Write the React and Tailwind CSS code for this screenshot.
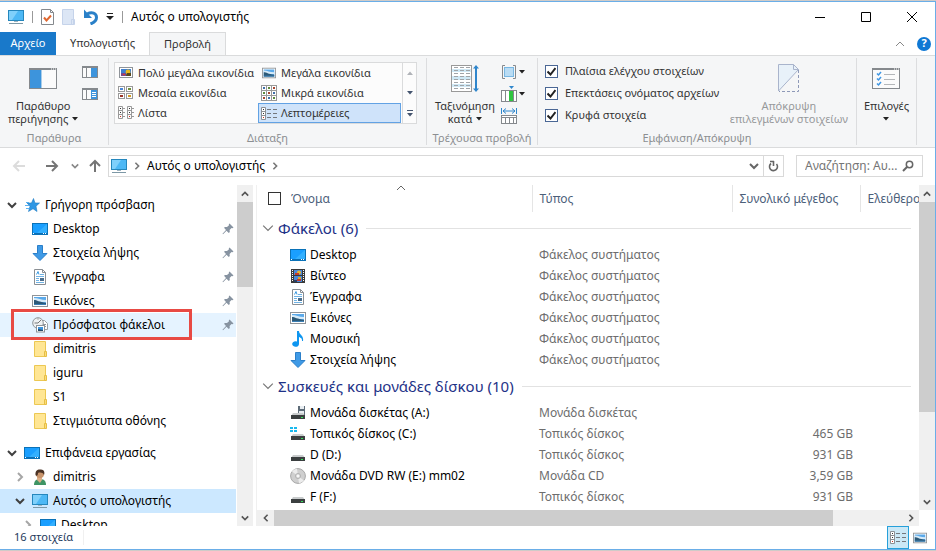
import { Fragment } from 'react';
import clsx from 'clsx';

/* ---------- Icons ---------- */

const MonitorIcon = ({ size = 16 }) => (
  <svg width={size} height={size} viewBox="0 0 16 16">
    <rect x="0.5" y="1.5" width="15" height="10" fill="#4db8f5" stroke="#2587bd" />
    <path d="M1 2h9L4 11H1z" fill="#7fd0fb" />
    <path d="M6 12h4v1H6z" fill="#9fb4c0" />
    <path d="M1 14h14v1H1z" fill="#7d98a6" />
  </svg>
);

const DesktopIcon = () => (
  <svg width="16" height="16" viewBox="0 0 16 16">
    <rect x="0.5" y="2.5" width="15" height="11" fill="#1a9fff" stroke="#0a72b8" />
    <path d="M15 3v9H5z" fill="#33b0ff" />
    <path d="M1 12h14v1H1z" fill="#0b6fb5" />
    <path d="M1 12h1v1H1zM11 12h1v1h-1zM13 12h1v1h-1z" fill="#fff" />
  </svg>
);

const DownloadIcon = () => (
  <svg width="16" height="16" viewBox="0 0 16 16">
    <path d="M5.5 0.5h5v8h4.500L8 15.5 1 8.500h4.500z" fill="#3f9ae6" stroke="#2b7fc9" />
  </svg>
);

const DocumentIcon = () => (
  <svg width="16" height="16" viewBox="0 0 16 16">
    <path d="M2.5 0.5h8l3 3v12h-11z" fill="#fff" stroke="#8a8f94" />
    <path d="M10.5 0.5v3h3" fill="none" stroke="#8a8f94" />
    <path d="M4.500 5.500l1.500-3 1 3" fill="none" stroke="#3b9ae0" />
    <path d="M8 5.500h4M4 7.5h8M4 9.5h3M4 11.5h3M4 13.5h8" fill="none" stroke="#6fb2e4" />
    <rect x="8" y="9" width="4" height="3" fill="#4a6d8c" />
  </svg>
);

const PictureIcon = ({ size = 16 }) => (
  <svg width={size} height={size} viewBox="0 0 16 16">
    <rect x="0.5" y="2.5" width="15" height="11" fill="#fff" stroke="#8f9499" />
    <rect x="2" y="4" width="12" height="8" fill="#5aa9ea" />
    <path d="M2 5c4 0 7 2 12 2v2H2z" fill="#d5eaf8" />
    <path d="M2 7c3 0 5 2 12 3v2H2z" fill="#2d5a78" />
    <path d="M2 11h12v1H2z" fill="#3b7fb5" />
  </svg>
);

const ColorPictureIcon = () => (
  <svg width="14" height="14" viewBox="0 0 14 14">
    <rect x="0.5" y="1.5" width="13" height="10" fill="#fff" stroke="#8f9499" />
    <rect x="2" y="3" width="10" height="7" fill="#3e7fd0" />
    <path d="M2 7h5v3H2z" fill="#7a4a8a" />
    <circle cx="9" cy="6" r="2.4" fill="#e8b81c" />
    <path d="M8 7h4v3H7z" fill="#5a4a1c" />
    <path d="M4 8h2v1H4z" fill="#e23b2e" />
  </svg>
);

const VideoIcon = () => (
  <svg width="16" height="16" viewBox="0 0 16 16">
    <path d="M1 1h14v14H1z" fill="#3a3a3a" />
    <path d="M2 2h1v1H2zM2 4h1v1H2zM2 6h1v1H2zM2 8h1v1H2zM2 10h1v1H2zM2 12h1v1H2zM13 2h1v1h-1zM13 4h1v1h-1zM13 6h1v1h-1zM13 8h1v1h-1zM13 10h1v1h-1zM13 12h1v1h-1z" fill="#fff" />
    <path d="M4 2h8v5H4zM4 8h8v6H4z" fill="#4a87d8" />
    <circle cx="9" cy="4.5" r="2" fill="#e7b52c" />
    <path d="M5 5h4v2H5zM7 11h4v2H7z" fill="#c4392b" />
    <path d="M8 9h3v2H8z" fill="#d9a52b" />
    <path d="M4 12h3v2H4z" fill="#27406a" />
  </svg>
);

const MusicIcon = () => (
  <svg width="16" height="16" viewBox="0 0 16 16">
    <path d="M7 0h2c0 4 5 4 4 10h-1c0-3-1-3-3-4v7a3.4 2.8 0 1 1-2-2.5z" fill="#0f96f0" />
  </svg>
);

const StarIcon = () => (
  <svg width="16" height="16" viewBox="0 0 16 16">
    <path d="M9.500 1.500l1.500 4.500h4.500l-3.500 3.200 1 5.300-4-2.800-4.500 2.800 1.500-5.300L3 6h4.500z" fill="#2f97e4" stroke="#1e7cc4" strokeWidth="0.6" />
    <path d="M2 5.500h3M1 8.500h4M2 11.500h3" stroke="#5db2f0" />
  </svg>
);

const RecentIcon = () => (
  <svg width="16" height="16" viewBox="0 0 16 16">
    <path d="M7.500 3.500h5l3 3v6h-8z" fill="#fff" stroke="#9a9fa3" />
    <circle cx="6" cy="6" r="5.300" fill="#eef1f3" stroke="#8f9499" />
    <path d="M6 6l3-3M6 6H2.500M6 1.500v1" fill="none" stroke="#777" />
    <path d="M11 7.500h3M13 9.500h1" stroke="#8f9499" />
    <rect x="4.500" y="8.500" width="8" height="6.500" fill="#fff" stroke="#8f9499" />
    <path d="M6 10h5v4H6z" fill="#3d93dc" />
    <path d="M6 12l5 1v1H6z" fill="#254c6b" />
  </svg>
);

const FolderIcon = () => (
  <svg width="16" height="16" viewBox="0 0 16 16">
    <path d="M2.500 0.500h11v15h-11z" fill="#ffe694" stroke="#ecc853" />
    <path d="M12.500 10.500h2v5h-2z" fill="#fbdc7a" stroke="#e6be45" />
  </svg>
);

const UserIcon = () => (
  <svg width="16" height="16" viewBox="0 0 16 16">
    <path d="M2 16c0-4 2-6 6-6s6 2 6 6z" fill="#3f9464" />
    <path d="M5 8h5v3l-2 3-3-3z" fill="#dcae87" />
    <circle cx="8" cy="5" r="4" fill="#c9956c" />
    <path d="M3.500 6C3 1 6 0 9 0.500c3 0 4 3 3 5.500C11 3.500 8 3 6 4c0 2-1 4-2.500 2z" fill="#4b3325" />
  </svg>
);

const DriveIcon = ({ kind }) => (
  <svg width="16" height="16" viewBox="0 0 16 16">
    {kind === 'floppy' && (
      <>
        <path d="M8 1h7v9H8z" fill="#5d6b78" />
        <path d="M10 1h4v3h-4zM9 6h5v3H9z" fill="#e8edf1" />
      </>
    )}
    {kind === 'system' && <path d="M0 1h3v2H0zM4 1h3v2H4zM0 4h3v2H0zM4 4h3v2H4z" fill="#19b9ee" />}
    <path d="M3 8h10l2 3H1z" fill="#c9cccd" />
    <path d="M1 10h14v4H1z" fill="#3b3f40" />
    <path d="M11 12h2v1h-2z" fill="#35e05a" />
  </svg>
);

const DiscIcon = () => (
  <svg width="16" height="16" viewBox="0 0 16 16">
    <circle cx="8" cy="8" r="7.400" fill="#cfcfcf" stroke="#a8a8a8" />
    <path d="M8 8L2 3.500A7.400 7.400 0 0 1 7 0.800zM8 8l6 4.500A7.400 7.400 0 0 1 9 15.200z" fill="#ececec" />
    <circle cx="8" cy="8" r="2.500" fill="#e4e4e4" stroke="#b0b0b0" />
    <circle cx="8" cy="8" r="1" fill="#fff" />
  </svg>
);

const PinIcon = () => (
  <svg width="12" height="12" viewBox="0 0 12 12">
    <path d="M7.500 0.500l4 4-1 0.800-1-0.200L7.600 7l0.200 2-1 1L4.500 7.700 1 11.200l-0.500-0.400L4 7 2 4.800l1-0.900 2 0.200L7 2.300 6.800 1.200z" fill="#8793a1" />
  </svg>
);

const Chevron = ({ dir = 'down', size = 10, color = '#555', weight = 2 }) => {
  const turn = { down: 0, left: 90, up: 180, right: 270 }[dir];
  return (
    <svg width={size} height={size} viewBox="0 0 10 10">
      <path d="M1 3l4 4 4-4" fill="none" stroke={color} strokeWidth={weight} transform={`rotate(${turn} 5 5)`} />
    </svg>
  );
};

const Caret = ({ color = '#222', up = false }) => (
  <svg width="6" height="4" viewBox="0 0 6 4">
    <path d={up ? 'M0 4h6L3 0.500z' : 'M0 0h6L3 3.500z'} fill={color} />
  </svg>
);

const ArrowIcon = ({ dir, color }) => {
  const turn = { left: 0, up: 90, right: 180 }[dir];
  return (
    <svg width="14" height="14" viewBox="0 0 14 14">
      <path d="M13 7H2M7 2L2 7l5 5" fill="none" stroke={color} strokeWidth="2" transform={`rotate(${turn} 7 7)`} />
    </svg>
  );
};

const NavPaneIcon = () => (
  <svg width="28" height="22" viewBox="0 0 28 22">
    <rect x="0.500" y="0.500" width="27" height="20" fill="#fbfbfb" stroke="#85898d" />
    <path d="M0 0h28v2H0z" fill="#85898d" />
    <path d="M22 0.500h1v1h-1zM24 0.500h1v1h-1zM26 0.500h1v1h-1z" fill="#fff" />
    <path d="M1 2h11v18H1z" fill="#3d94dc" />
    <path d="M12 2h1v18h-1z" fill="#a9cdea" />
  </svg>
);

const SidePaneIcon = ({ lines }) => (
  <svg width="16" height="12" viewBox="0 0 16 12">
    <rect x="0.500" y="0.500" width="15" height="11" fill="#fbfbfb" stroke="#85898d" />
    <path d="M0 0h16v2H0zM4 2h1v9H4z" fill="#85898d" />
    <path d="M9 2h6v9H9z" fill="#3d94dc" />
    {lines && <path d="M10 4.500h4M10 6.500h4M10 8.500h4" stroke="#fff" />}
  </svg>
);

const MediumIconsIcon = () => (
  <svg width="16" height="14" viewBox="0 0 16 14">
    {[[0, 0], [8, 0], [0, 7], [8, 7]].map(([x, y], i) => (
      <g key={i}>
        <rect x={x + 0.5} y={y + 0.5} width="6" height="5" fill="#fff" stroke="#999" />
        <rect x={x + 2} y={y + 2} width="3" height="2" fill={['#4a87d8', '#6f8f3c', '#9c3528', '#d09a22'][i]} />
      </g>
    ))}
  </svg>
);

const SmallIconsIcon = () => (
  <svg width="16" height="16" viewBox="0 0 16 16">
    {[0, 1, 2].map((row) =>
      [0, 1, 2].map((col) => (
        <g key={`${row}${col}`}>
          <rect x={col * 5 + 0.5} y={row * 5 + 0.5} width="5" height="5" fill="#fff" stroke="#999" />
          <rect x={col * 5 + 2} y={row * 5 + 2} width="2" height="2" fill={['#3f6fa8', '#5c8a3c', '#a8452f'][(row + col) % 3]} />
        </g>
      ))
    )}
  </svg>
);

const ListIcon = () => (
  <svg width="16" height="14" viewBox="0 0 16 14">
    {[0, 9].map((x) => (
      <g key={x}>
        <path d={`M${x + 0.5} 0.500h4v12h-4zM${x} 4.500h4M${x} 8.500h4M${x + 5} 2.500h2M${x + 5} 6.500h2M${x + 5} 10.500h2`} fill="none" stroke="#999" />
        <path d={`M${x + 2} 2h1v1h-1zM${x + 2} 6h1v1h-1z`} fill="#333" />
        <path d={`M${x + 2} 10h1v1h-1z`} fill="#d02f20" />
      </g>
    ))}
  </svg>
);

const DetailsIcon = () => (
  <svg width="16" height="13" viewBox="0 0 16 13">
    <path d="M0.500 0.500h4v12h-4zM0 4.500h4M0 8.500h4" fill="#fff" stroke="#8b8f94" />
    <path d="M2 2h1v1H2zM2 6h1v1H2z" fill="#333" />
    <path d="M2 10h1v1H2z" fill="#d02f20" />
    <path d="M6 2.500h4M12 2.500h4M6 6.500h4M12 6.500h4M6 10.500h4M12 10.500h4" stroke="#74787d" />
  </svg>
);

const SortIcon = () => (
  <svg width="28" height="30" viewBox="0 0 28 30">
    <rect x="0.500" y="1.500" width="20" height="26" fill="#fff" stroke="#999" />
    <path d="M1 5h19v3H1zM1 12h19v4H1zM1 20h19v3H1z" fill="#cfe8f5" />
    <path d="M3 3.500h16M3 6.500h16M3 9.500h16M3 12.500h16M3 15.500h16M3 18.500h16M3 21.500h16M3 24.500h16" stroke="#a0a4a8" strokeDasharray="4 2" />
    <path d="M25 3v22" stroke="#2f86cc" strokeWidth="2" />
    <path d="M22 4.500L25 1l3 3.500zM22 24.500L25 28l3-3.500z" fill="#2f86cc" />
  </svg>
);

const GroupByIcon = () => (
  <svg width="16" height="16" viewBox="0 0 16 16">
    <path d="M4 1.500H1.500v13H4M12 1.500h2.500v13H12" fill="none" stroke="#85898d" />
    <rect x="3.500" y="3.500" width="9" height="9" fill="#b9dcf4" stroke="#79b7e2" />
  </svg>
);

const AddColumnIcon = () => (
  <svg width="16" height="16" viewBox="0 0 16 16">
    <rect x="0.500" y="4.500" width="15" height="11" fill="#fff" stroke="#85898d" />
    <path d="M4.500 4v12M12.500 4v12" stroke="#85898d" />
    <path d="M8 5h4v10H8z" fill="#2fc540" />
    <path d="M8 0h5l-2.500 3z" fill="#2f86cc" />
  </svg>
);

const SizeColumnsIcon = () => (
  <svg width="16" height="16" viewBox="0 0 16 16">
    <path d="M0.500 0v6M15.500 0v6M2 3h12M5 0.500L2 3l3 2.500M11 0.500L14 3l-3 2.500" fill="none" stroke="#2f86cc" />
    <rect x="0.500" y="7.500" width="15" height="8" fill="#fff" stroke="#85898d" />
    <path d="M0 9.500h16M4.500 10v6M8.500 10v6M12.500 10v6" stroke="#85898d" />
  </svg>
);

const HideIcon = () => (
  <svg width="22" height="29" viewBox="0 0 22 29">
    <path d="M0.500 27V0.500h15l5 5L0.500 27z" fill="#e8f1f9" stroke="#a9b4cc" />
    <path d="M15.500 0.500v5h5" fill="none" stroke="#a9b4cc" />
    <path d="M20.500 6v21.500H1" fill="none" stroke="#8e99b8" strokeDasharray="3 2" />
  </svg>
);

const OptionsIcon = () => (
  <svg width="28" height="22" viewBox="0 0 28 22">
    <rect x="0.500" y="0.500" width="27" height="20" fill="#fbfbfb" stroke="#85898d" />
    <path d="M0 0h28v2H0z" fill="#85898d" />
    <path d="M22 0.500h1v1h-1zM24 0.500h1v1h-1zM26 0.500h1v1h-1z" fill="#fff" />
    <path d="M5 5.500l1.500 1.500L9 4M5 10.500l1.500 1.500L9 9M5 15.500l1.500 1.500L9 14" fill="none" stroke="#3f97e4" strokeWidth="1.500" />
    <path d="M12 6.500h11M12 11.500h11M12 16.500h11" stroke="#b4b7ba" />
  </svg>
);

/* ---------- Data ---------- */

const tabs = [
  { label: 'Υπολογιστής', active: false },
  { label: 'Προβολή', active: true }
];

const layouts = [
  { label: 'Πολύ μεγάλα εικονίδια', icon: <ColorPictureIcon /> },
  { label: 'Μεγάλα εικονίδια', icon: <PictureIcon size={14} /> },
  { label: 'Μεσαία εικονίδια', icon: <MediumIconsIcon /> },
  { label: 'Μικρά εικονίδια', icon: <SmallIconsIcon /> },
  { label: 'Λίστα', icon: <ListIcon /> },
  { label: 'Λεπτομέρειες', icon: <DetailsIcon />, active: true }
];

const toggles = ['Πλαίσια ελέγχου στοιχείων', 'Επεκτάσεις ονόματος αρχείων', 'Κρυφά στοιχεία'];

const quickAccess = [
  { label: 'Γρήγορη πρόσβαση', icon: <StarIcon />, level: 0, chevron: 'down' },
  { label: 'Desktop', icon: <DesktopIcon />, level: 1, pinned: true },
  { label: 'Στοιχεία λήψης', icon: <DownloadIcon />, level: 1, pinned: true },
  { label: 'Έγγραφα', icon: <DocumentIcon />, level: 1, pinned: true },
  { label: 'Εικόνες', icon: <PictureIcon />, level: 1, pinned: true },
  { label: 'Πρόσφατοι φάκελοι', icon: <RecentIcon />, level: 1, pinned: true, hovered: true, framed: true },
  { label: 'dimitris', icon: <FolderIcon />, level: 1 },
  { label: 'iguru', icon: <FolderIcon />, level: 1 },
  { label: 'S1', icon: <FolderIcon />, level: 1 },
  { label: 'Στιγμιότυπα οθόνης', icon: <FolderIcon />, level: 1 }
];

const desktopTree = [
  { label: 'Επιφάνεια εργασίας', icon: <DesktopIcon />, level: 0, chevron: 'down' },
  { label: 'dimitris', icon: <UserIcon />, level: 1, chevron: 'right' },
  { label: 'Αυτός ο υπολογιστής', icon: <MonitorIcon />, level: 1, chevron: 'down', selected: true },
  { label: 'Desktop', icon: <DesktopIcon />, level: 2, chevron: 'right' }
];

const groups = [
  {
    title: 'Φάκελοι (6)',
    rows: [
      { name: 'Desktop', type: 'Φάκελος συστήματος', icon: <DesktopIcon /> },
      { name: 'Βίντεο', type: 'Φάκελος συστήματος', icon: <VideoIcon /> },
      { name: 'Έγγραφα', type: 'Φάκελος συστήματος', icon: <DocumentIcon /> },
      { name: 'Εικόνες', type: 'Φάκελος συστήματος', icon: <PictureIcon /> },
      { name: 'Μουσική', type: 'Φάκελος συστήματος', icon: <MusicIcon /> },
      { name: 'Στοιχεία λήψης', type: 'Φάκελος συστήματος', icon: <DownloadIcon /> }
    ]
  },
  {
    title: 'Συσκευές και μονάδες δίσκου (10)',
    rows: [
      { name: 'Μονάδα δισκέτας (A:)', type: 'Μονάδα δισκέτας', icon: <DriveIcon kind="floppy" /> },
      { name: 'Τοπικός δίσκος (C:)', type: 'Τοπικός δίσκος', size: '465 GB', icon: <DriveIcon kind="system" /> },
      { name: 'D (D:)', type: 'Τοπικός δίσκος', size: '931 GB', icon: <DriveIcon /> },
      { name: 'Μονάδα DVD RW (E:) mm02', type: 'Μονάδα CD', size: '3,59 GB', icon: <DiscIcon /> },
      { name: 'F (F:)', type: 'Τοπικός δίσκος', size: '931 GB', icon: <DriveIcon /> }
    ]
  }
];

/* ---------- Window parts ---------- */

const TitleBar = () => (
  <header className="flex h-[30px] items-center pl-2">
    <MonitorIcon />
    <span className="mx-2 h-3 w-px bg-[#999]" />
    <div className="flex items-center gap-2">
      <button aria-label="Ιδιότητες">
        <svg width="13" height="16" viewBox="0 0 13 16" className="block">
          <path d="M0.500 0.500h9l3 3v12H0.500z" fill="#fff" stroke="#85898d" />
          <path d="M9.500 0.500v3h3" fill="none" stroke="#85898d" />
          <path d="M3 8.500l2.500 3 4.500-5" fill="none" stroke="#e0672f" strokeWidth="2" />
        </svg>
      </button>
      <button aria-label="Νέος φάκελος">
        <svg width="14" height="16" viewBox="0 0 14 16" className="block">
          <path d="M0.500 0.500h11v15H0.500zM9.500 10.500h3v5h-3z" fill="#dce6f5" stroke="#c5d3ea" />
        </svg>
      </button>
      <button aria-label="Αναίρεση">
        <svg width="14" height="16" viewBox="0 0 14 16" className="block">
          <path d="M3 5c5-2.500 9.500-1 9.500 3.500 0 3-2.500 5-6 6.500" fill="none" stroke="#2a80c8" strokeWidth="3" />
          <path d="M0 0.500v8.500h8z" fill="#2a80c8" />
        </svg>
      </button>
      <button aria-label="Προσαρμογή">
        <svg width="8" height="8" viewBox="0 0 8 8" className="block">
          <path d="M1 0h6v1H1zM0 3h8L4 7z" fill="#222" />
        </svg>
      </button>
    </div>
    <span className="mx-2 h-3 w-px bg-[#999]" />
    <h1 className="text-xs text-black">Αυτός ο υπολογιστής</h1>
    <div className="ml-auto flex">
      <button aria-label="Ελαχιστοποίηση" className="flex w-[46px] justify-center">
        <svg width="10" height="10"><path d="M0 5.500h10" stroke="#000" /></svg>
      </button>
      <button aria-label="Μεγιστοποίηση" className="flex w-[46px] justify-center">
        <svg width="10" height="10"><path d="M0.500 0.500h9v9h-9z" fill="none" stroke="#000" /></svg>
      </button>
      <button aria-label="Κλείσιμο" className="flex w-[46px] justify-center">
        <svg width="10" height="10"><path d="M0 0l10 10M10 0L0 10" stroke="#000" /></svg>
      </button>
    </div>
  </header>
);

const TabBar = () => (
  <div className="flex h-[23px] items-stretch text-[11px]">
    <button className="w-14 bg-[#1979ca] text-white">Αρχείο</button>
    {tabs.map((tab) => (
      <button
        key={tab.label}
        className={clsx(
          'px-3.5',
          tab.active ? '-mb-px border border-b-0 border-[#dadbdc] bg-[#f5f6f7] text-[#333]' : 'text-[#333]'
        )}
      >
        {tab.label}
      </button>
    ))}
    <div className="ml-auto flex items-center gap-3 pr-1">
      <button aria-label="Σύμπτυξη κορδέλας" className="flex">
        <Chevron dir="up" color="#888" weight={1} />
      </button>
      <button aria-label="Βοήθεια" className="flex size-3.5 items-center justify-center rounded-full bg-[#0f78d4] font-bold text-white">
        ?
      </button>
    </div>
  </div>
);

const RibbonGroup = ({ label, className, children }) => (
  <section className={clsx('flex shrink-0 flex-col border-r border-[#dcdddf]', className)}>
    <div className="flex h-[73px] items-start">{children}</div>
    <h2 className="text-center leading-[14px] text-[#8c8f92]">{label}</h2>
  </section>
);

const BigButton = ({ icon, first, second, disabled, caret }) => (
  <button disabled={disabled} className={clsx('flex flex-col items-center whitespace-nowrap', disabled ? 'text-[#97999b]' : 'text-[#333]')}>
    <span className="flex h-[41px] items-center">{icon}</span>
    <span className="leading-[13px]">{first}</span>
    <span className="flex h-[13px] items-center gap-1 leading-[13px]">
      {second}
      {caret && <Caret />}
    </span>
  </button>
);

const Ribbon = () => (
  <div className="flex h-[93px] border-y border-[#dadbdc] bg-[#f5f6f7] py-[2px] text-[11px]">
    <RibbonGroup label="Παράθυρα" className="w-[109px]">
      <div className="flex gap-1 pl-2">
        <BigButton icon={<NavPaneIcon />} first="Παράθυρο" second="περιήγησης" caret />
        <div className="flex flex-col gap-2.5 pt-2">
          <button aria-label="Παράθυρο προεπισκόπησης"><SidePaneIcon /></button>
          <button aria-label="Παράθυρο λεπτομερειών"><SidePaneIcon lines /></button>
        </div>
      </div>
    </RibbonGroup>

    <RibbonGroup label="Διάταξη" className="w-[318px]">
      <div className="mt-1 mr-[9px] ml-[5px] flex flex-1 border border-[#dadbdc] bg-[#fcfcfc]">
        <div className="grid flex-1 grid-cols-2">
          {layouts.map((item) => (
            <button
              key={item.label}
              className={clsx(
                'flex h-5 items-center gap-1 border pl-0.5 whitespace-nowrap text-[#333]',
                item.active ? 'border-[#62a2e4] bg-[#cfe3fa]' : 'border-transparent'
              )}
            >
              <span className="flex w-4 shrink-0 justify-center">{item.icon}</span>
              {item.label}
            </button>
          ))}
        </div>
        <div className="ml-px flex w-3.5 flex-col border-l border-[#dadbdc]">
          <button aria-label="Πάνω" className="flex h-5 items-center justify-center"><Caret up color="#b0b3b8" /></button>
          <button aria-label="Κάτω" className="flex h-5 items-center justify-center"><Caret color="#44546e" /></button>
          <button aria-label="Περισσότερα" className="flex h-5 flex-col items-center justify-center gap-0.5">
            <span className="h-px w-1.5 bg-[#44546e]" />
            <Caret color="#44546e" />
          </button>
        </div>
      </div>
    </RibbonGroup>

    <RibbonGroup label="Τρέχουσα προβολή" className="w-[111px]">
      <div className="flex gap-1.5 pl-2">
        <BigButton icon={<SortIcon />} first="Ταξινόμηση" second="κατά" caret />
        <div className="flex flex-col gap-1.5 pt-1.5">
          <button aria-label="Ομαδοποίηση κατά" className="flex items-center gap-0.5"><GroupByIcon /><Caret /></button>
          <button aria-label="Προσθήκη στηλών" className="flex items-center gap-0.5"><AddColumnIcon /><Caret /></button>
          <button aria-label="Προσαρμογή πλάτους στηλών"><SizeColumnsIcon /></button>
        </div>
      </div>
    </RibbonGroup>

    <RibbonGroup label="Εμφάνιση/Απόκρυψη" className="w-[319px]">
      <div className="flex flex-1 justify-between pr-2 pl-[7px]">
        <div className="pt-0.5">
          {toggles.map((label) => (
            <label key={label} className="flex h-[22px] items-center gap-[7px] whitespace-nowrap text-[#333]">
              <span className="grid size-[13px] place-items-center">
                <input type="checkbox" defaultChecked className="peer col-start-1 row-start-1 size-[13px] appearance-none border border-[#4a6795] bg-white" />
                <svg width="9" height="9" viewBox="0 0 9 9" className="invisible col-start-1 row-start-1 peer-checked:visible">
                  <path d="M0.500 4.500l3 3L8.500 1" fill="none" stroke="#222" strokeWidth="2" />
                </svg>
              </span>
              {label}
            </label>
          ))}
        </div>
        <BigButton icon={<HideIcon />} first="Απόκρυψη" second="επιλεγμένων στοιχείων" disabled />
      </div>
    </RibbonGroup>

    <RibbonGroup label="" className="w-[60px]">
      <div className="flex flex-1 justify-center">
        <BigButton icon={<OptionsIcon />} first="Επιλογές" caret />
      </div>
    </RibbonGroup>
  </div>
);

const AddressBar = () => (
  <div className="flex h-[37px] items-start px-3 pt-[7px]">
    <nav className="flex h-[22px] w-24 items-center justify-between pr-1.5">
      <button aria-label="Πίσω"><ArrowIcon dir="left" color="#dcdcdc" /></button>
      <button aria-label="Εμπρός" className="ml-2.5"><ArrowIcon dir="right" color="#757575" /></button>
      <button aria-label="Πρόσφατες θέσεις" className="ml-1"><Chevron size={8} color="#888" /></button>
      <button aria-label="Επάνω"><ArrowIcon dir="up" color="#757575" /></button>
    </nav>
    <div className="flex h-[22px] flex-1 items-center border border-[#d9d9d9] pl-0.5 text-black">
      <MonitorIcon />
      <span className="flex w-5 justify-center"><Chevron dir="right" size={8} color="#777" /></span>
      <button>Αυτός ο υπολογιστής</button>
      <span className="flex w-5 justify-center"><Chevron dir="right" size={8} color="#777" /></span>
      <button aria-label="Προηγούμενες θέσεις" className="mr-1 ml-auto"><Chevron color="#666" /></button>
      <button aria-label="Ανανέωση" className="flex h-full w-5 items-center justify-center border-l border-[#d9d9d9]">
        <svg width="11" height="12" viewBox="0 0 11 12">
          <path d="M8.500 4A4 4 0 1 1 3 3.500" fill="none" stroke="#666" strokeWidth="1.600" />
          <path d="M2 1.500h4M5.500 1v5" fill="none" stroke="#666" strokeWidth="1.600" />
        </svg>
      </button>
    </div>
    <label className="ml-3 flex h-[22px] w-[127px] items-center border border-[#d9d9d9] pr-2 pl-2">
      <input type="text" placeholder="Αναζήτηση: Αυ..." aria-label="Αναζήτηση" className="min-w-0 flex-1 outline-none placeholder:text-[#757575]" />
      <svg width="12" height="12" viewBox="0 0 12 12">
        <circle cx="7.500" cy="4.500" r="3.200" fill="none" stroke="#666" strokeWidth="1.500" />
        <path d="M5 7L1 11" stroke="#666" strokeWidth="2" />
      </svg>
    </label>
  </div>
);

const TreeItem = ({ item }) => (
  <li
    className={clsx(
      'relative flex h-6 items-center',
      item.level === 0 && 'pl-1',
      item.level === 1 && 'pl-3',
      item.level === 2 && 'pl-5',
      item.hovered && 'bg-[#e5f3ff]',
      item.selected && 'bg-[#cce8ff]'
    )}
  >
    <span className="flex w-4 justify-center">
      {item.chevron && <Chevron dir={item.chevron} color={item.chevron === 'down' ? '#404040' : '#a6a6a6'} />}
    </span>
    <a href="#" className="ml-1 flex items-center gap-[5px] whitespace-nowrap text-black">
      {item.icon}
      {item.label}
    </a>
    {item.pinned && <span className="mr-0.5 ml-auto"><PinIcon /></span>}
    {item.framed && <span className="pointer-events-none absolute -top-1 left-[11px] h-[31px] w-[181px] border-3 border-[#e84a44]" />}
  </li>
);

const Sidebar = () => (
  <aside className="flex w-[253px] shrink-0">
    <nav className="min-w-0 flex-1 space-y-2 overflow-hidden pt-2">
      <ul>{quickAccess.map((item) => <TreeItem key={item.label} item={item} />)}</ul>
      <ul>{desktopTree.map((item) => <TreeItem key={item.label} item={item} />)}</ul>
    </nav>
    <div className="ml-px flex w-4 flex-col bg-[#f0f0f0]">
      <span className="flex h-[17px] items-center justify-center"><Chevron dir="up" size={8} /></span>
      <span className="h-[85px] bg-[#cdcdcd]" />
      <span className="mt-auto flex h-[17px] items-center justify-center"><Chevron size={8} /></span>
    </div>
  </aside>
);

const FileTable = () => (
  <table className="w-full table-fixed border-collapse">
    <colgroup>
      <col className="w-[275px]" />
      <col className="w-[200px]" />
      <col className="w-[128px]" />
      <col />
    </colgroup>
    <thead>
      <tr className="h-[27px] text-left align-middle text-[#4c607a]">
        <th className="relative border-r border-[#e5e5e5] p-0 pl-[11px] font-normal">
          <label className="flex items-center gap-2.5">
            <input type="checkbox" className="size-[13px] appearance-none border border-[#333] bg-white" />
            Όνομα
          </label>
          <span className="absolute -top-0.5 left-[139px]"><Chevron dir="up" color="#666" weight={1} /></span>
        </th>
        <th className="border-r border-[#e5e5e5] p-0 pl-[7px] font-normal">Τύπος</th>
        <th className="border-r border-[#e5e5e5] p-0 pl-[7px] font-normal">Συνολικό μέγεθος</th>
        <th className="overflow-hidden p-0 pl-[7px] font-normal whitespace-nowrap">Ελεύθερος χώρος</th>
      </tr>
    </thead>
    {groups.map((group) => (
      <Fragment key={group.title}>
        <tbody>
          <tr className="h-8">
            <th colSpan={4} className="p-0 pr-2 pl-[5px] text-left font-normal">
              <div className="flex items-center">
                <Chevron size={12} color="#777" weight={1} />
                <span className="mr-2 ml-1 text-[15px] leading-5 text-[#1e3287]">{group.title}</span>
                <span className="h-px flex-1 bg-[#e2e2e2]" />
              </div>
            </th>
          </tr>
          {group.rows.map((row) => (
            <tr key={row.name} className="h-[21px] text-[#6d6d6d]">
              <td className="p-0 pl-[33px]">
                <span className="flex items-center gap-1 text-black">{row.icon}{row.name}</span>
              </td>
              <td className="p-0 pl-[7px]">{row.type}</td>
              <td className="p-0 pr-[7px] text-right">{row.size}</td>
              <td className="p-0" />
            </tr>
          ))}
        </tbody>
      </Fragment>
    ))}
  </table>
);

const FileList = () => (
  <main className="ml-[3px] flex min-w-0 flex-1 flex-col border-l border-[#f0f0f0]">
    <div className="flex min-h-0 flex-1">
      <div className="min-w-0 flex-1 overflow-hidden"><FileTable /></div>
      <div className="flex w-4 flex-col bg-[#f0f0f0]">
        <span className="flex h-[17px] items-center justify-center"><Chevron dir="up" size={8} /></span>
        <span className="h-[210px] bg-[#cdcdcd]" />
        <span className="mt-auto flex h-[17px] items-center justify-center"><Chevron size={8} /></span>
      </div>
    </div>
    <div className="mr-4 flex h-4 bg-[#f0f0f0]">
      <span className="flex w-[17px] items-center justify-center"><Chevron dir="left" size={8} /></span>
      <span className="flex flex-1"><span className="w-[89%] bg-[#cdcdcd]" /></span>
      <span className="flex w-[17px] items-center justify-center"><Chevron dir="right" size={8} /></span>
    </div>
  </main>
);

const StatusBar = () => (
  <footer className="flex h-[23px] items-center pl-3.5 text-[11px] text-[#1e395b]">
    <span className="border-r border-[#f0f0f0] pr-2.5">16 στοιχεία</span>
    <div className="ml-auto flex h-full items-center pr-1">
      <button aria-label="Λεπτομέρειες" className="flex h-full w-[22px] items-center justify-center border border-[#26a0da] bg-[#cbe8f6]">
        <DetailsIcon />
      </button>
      <button aria-label="Μεγάλα εικονίδια" className="flex w-[22px] justify-center"><PictureIcon size={14} /></button>
    </div>
  </footer>
);

const App = () => (
  <div className="flex h-screen flex-col border-t border-b border-[#cfcbc8] bg-white font-['Noto_Sans','Open_Sans',sans-serif] text-xs">
    <div className="flex min-h-0 flex-1 flex-col border-t border-r border-b border-[#6aaee8]">
      <TitleBar />
      <TabBar />
      <Ribbon />
      <AddressBar />
      <div className="flex min-h-0 flex-1">
        <Sidebar />
        <FileList />
      </div>
      <StatusBar />
    </div>
  </div>
);

export default App;
